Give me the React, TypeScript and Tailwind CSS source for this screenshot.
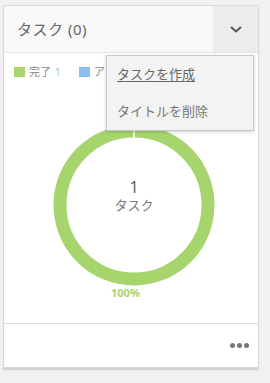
import React from "react";

export default function App() {
  const r = 74;
  return (
    <div
      className="w-[270px] h-[383px] bg-[#f1f1f1] pt-[5px] pl-[3px]"
      style={{ fontFamily: '"Noto Sans", "Noto Sans CJK JP", sans-serif' }}
    >
      <div className="relative w-[256px] h-[363px] bg-white border border-[#d9d9d9] shadow-[0_2px_1px_rgba(0,0,0,0.12)] flex flex-col">
        <div className="h-[47px] flex bg-[#f8f8f8] border-b border-[#e2e2e2]">
          <div className="flex-1 flex items-center pl-[13px] text-[15px] text-[#666] tracking-[0.5px]">
            タスク (0)
          </div>
          <div className="w-[45px] bg-[#ececec] flex items-center justify-center">
            <svg width="14" height="10" viewBox="0 0 14 10">
              <path d="M2 3 L7 7.5 L12 3" fill="none" stroke="#555" strokeWidth="2" />
            </svg>
          </div>
        </div>
        <div className="flex-1 relative">
          <div className="flex items-center pl-[10px] pt-[11px] text-[11px] text-[#888] gap-[4px]">
            <span className="w-[11px] h-[10px] bg-[#a5d56c]" />
            <span>完了</span>
            <span className="text-[#a5d56c] text-[10px] mr-[14px]">1</span>
            <span className="w-[11px] h-[10px] bg-[#8cbdf2]" />
            <span>ア</span>
          </div>
          <div className="absolute left-[49px] top-[71px] w-[162px] h-[162px]">
            <svg width="162" height="162" viewBox="0 0 162 162">
              <circle cx="81" cy="81" r={r} fill="none" stroke="#a5d56c" strokeWidth="13" />
              <line x1="81" y1="0" x2="81" y2="14" stroke="#fff" strokeWidth="1.5" />
            </svg>
            <div className="absolute inset-0 flex flex-col items-center justify-center pb-[20px] text-[#777] leading-none">
              <span className="text-[16px] text-[#666]">1</span>
              <span className="text-[13px] mt-[4px]">タスク</span>
            </div>
          </div>
          <div className="absolute left-[107px] top-[232px] text-[11px] font-bold text-[#a5d56c]">100%</div>
        </div>
        <div className="h-[44px] border-t border-[#dcdcdc] flex items-center justify-end pr-[9px]">
          <div className="flex gap-[2px]">
            <span className="w-[5px] h-[5px] rounded-full bg-[#777]" />
            <span className="w-[5px] h-[5px] rounded-full bg-[#777]" />
            <span className="w-[5px] h-[5px] rounded-full bg-[#777]" />
          </div>
        </div>
        <div className="absolute left-[102px] top-[49px] w-[148px] h-[76px] bg-[#f3f3f3] border border-[#c9c9c9] shadow-[0_1px_3px_rgba(0,0,0,0.2)] flex flex-col text-[13px] text-[#777]">
          <div className="h-[38px] flex items-center pl-[10px]">
            <span className="underline underline-offset-2 text-[#666]">タスクを作成</span>
          </div>
          <div className="h-[36px] flex items-center pl-[10px]">タイトルを削除</div>
        </div>
      </div>
    </div>
  );
}
